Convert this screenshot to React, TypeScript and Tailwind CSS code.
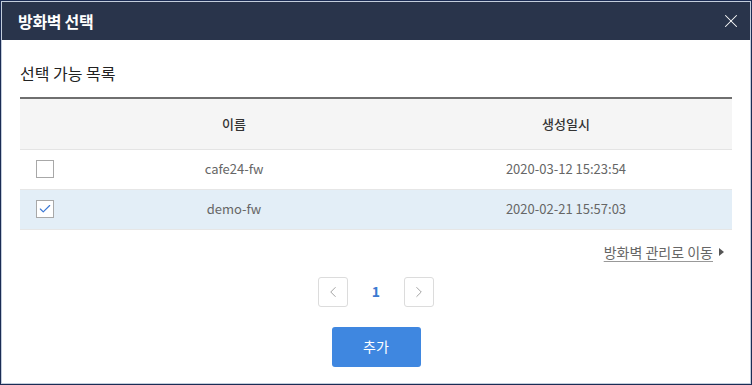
import { Check, ChevronLeft, ChevronRight, X } from 'lucide-react';

const rows = [
  { name: 'cafe24-fw', created: '2020-03-12 15:23:54', checked: false },
  { name: 'demo-fw', created: '2020-02-21 15:57:03', checked: true },
];

const font = { fontFamily: '"Noto Sans CJK KR", "Noto Sans", sans-serif' };

export default function App() {
  return (
    <div className="w-[752px] h-[385px] bg-white" style={font}>
      <div className="h-full border border-[#1b2c54]">
        <div className="h-full border border-[#c3cddc] flex flex-col">
          {/* header */}
          <div className="h-[38px] bg-[#29344b] flex items-center justify-between pl-[16px] pr-[8px]">
            <h1 className="text-white text-[16px] font-bold tracking-[-0.3px]">방화벽 선택</h1>
            <X className="h-[22px] w-[22px] text-white" strokeWidth={1.1} />
          </div>

          <div className="flex-1 px-[18px] pt-[22px]">
            <h2 className="text-[16px] text-[#222] leading-[22px]">선택 가능 목록</h2>

            <table className="w-full mt-[13px] border-t-2 border-[#6f6f6f] text-[13px] table-fixed">
              <colgroup>
                <col className="w-[48px]" />
                <col className="w-[332px]" />
                <col />
              </colgroup>
              <thead>
                <tr className="h-[51px] bg-[#f5f5f5] border-b border-[#e4e4e4]">
                  <th />
                  <th className="font-medium text-[#333]">이름</th>
                  <th className="font-medium text-[#333]">생성일시</th>
                </tr>
              </thead>
              <tbody>
                {rows.map((r) => (
                  <tr
                    key={r.name}
                    className={`h-[40px] border-b border-[#e6e6e6] ${r.checked ? 'bg-[#e3eef7]' : 'bg-white'}`}
                  >
                    <td className="pl-[16px]">
                      <span className="flex h-[18px] w-[18px] items-center justify-center border border-[#a8a8a8] bg-white">
                        {r.checked && <Check className="h-[14px] w-[14px] text-[#3b78d4]" strokeWidth={2} />}
                      </span>
                    </td>
                    <td className="text-center text-[#666]">{r.name}</td>
                    <td className="text-center text-[#666]">{r.created}</td>
                  </tr>
                ))}
              </tbody>
            </table>

            <div className="flex justify-end items-center mt-[12px] pr-[8px]">
              <a className="text-[14px] text-[#666] underline underline-offset-[3px] decoration-[#999]">방화벽 관리로 이동</a>
              <span className="ml-[6px] w-0 h-0 border-y-[4px] border-y-transparent border-l-[5px] border-l-[#555]" />
            </div>

            <div className="flex justify-center items-center gap-[20px] mt-[14px]">
              <button className="h-[30px] w-[30px] flex items-center justify-center border border-[#dcdcdc] rounded-[3px] bg-white">
                <ChevronLeft className="h-[18px] w-[18px] text-[#999]" strokeWidth={1.2} />
              </button>
              <span className="text-[14px] font-bold text-[#3b7ad1] w-[16px] text-center">1</span>
              <button className="h-[30px] w-[30px] flex items-center justify-center border border-[#dcdcdc] rounded-[3px] bg-white">
                <ChevronRight className="h-[18px] w-[18px] text-[#999]" strokeWidth={1.2} />
              </button>
            </div>

            <div className="flex justify-center mt-[20px]">
              <button className="h-[40px] w-[89px] bg-[#3f87e0] rounded-[3px] text-white text-[14px]">추가</button>
            </div>
          </div>
        </div>
      </div>
    </div>
  );
}
